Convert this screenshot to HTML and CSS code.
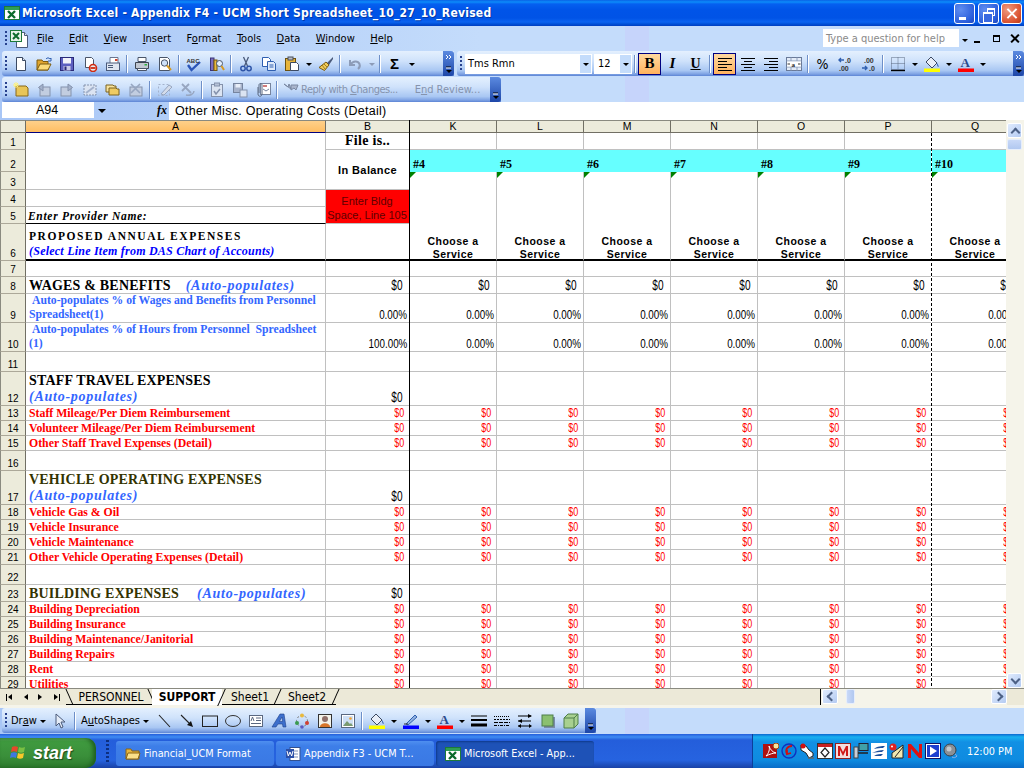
FILE: index.html
```html
<!DOCTYPE html>
<html lang="en">
<head>
<meta charset="utf-8">
<title>Microsoft Excel - Appendix F4</title>
<link rel="stylesheet" href="styles.css">
</head>
<body>
<svg class="defs" aria-hidden="true">
  <symbol id="xl" viewBox="0 0 16 16"><rect x="0.500" y="1.500" width="15" height="13" fill="#fff" stroke="#1d7a3a"/><rect x="1" y="2" width="14" height="3" fill="#2f9e55"/><path d="M4 6l7 7M11 6l-7 7" stroke="#0c6b2c" stroke-width="2.400"/></symbol>
  <symbol id="docxl" viewBox="0 0 18 18"><path d="M6.500 2.500h8l3 3v12h-11z" fill="#fff" stroke="#4a5a7a"/><path d="M14.500 2.500v3h3" fill="#dfe6f2" stroke="#4a5a7a"/><rect x="0.500" y="0.500" width="11" height="11" fill="#e8f4ea" stroke="#1d7a3a"/><path d="M3 3l6 6M9 3l-6 6" stroke="#0c6b2c" stroke-width="2"/></symbol>
  <symbol id="chev1" viewBox="0 0 11 25"><path d="M3 4l2 2-2 2M6 4l2 2-2 2" fill="none" stroke="#fff"/><path d="M3 16h5" stroke="#000"/><path d="M3 19h6l-3 3z" fill="#000"/><path d="M3 17h5" stroke="#fff"/></symbol>
  <symbol id="chev2" viewBox="0 0 11 25"><path d="M3 16h5" stroke="#000"/><path d="M3 19h6l-3 3z" fill="#000"/><path d="M3 17h5" stroke="#fff"/></symbol>
  <symbol id="new" viewBox="0 0 16 16"><path d="M3.500 1.500h6l3 3v10h-9z" fill="#fff" stroke="#3c4a63"/><path d="M9.500 1.500v3h3" fill="#d8e2f2" stroke="#3c4a63"/></symbol>
  <symbol id="open" viewBox="0 0 16 16"><path d="M1 14V4h5l1 1.500h5V14z" fill="#e0a52e" stroke="#7a5a10"/><path d="M1 14l3-6h11l-3 6z" fill="#fbdb7a" stroke="#7a5a10"/><path d="M10 3c1-1.500 3-1.500 4 0l1-1v3h-3" fill="none" stroke="#2f5fb0"/></symbol>
  <symbol id="save" viewBox="0 0 16 16"><rect x="1.500" y="1.500" width="13" height="13" fill="#5d5fc0" stroke="#2a2a78"/><rect x="4" y="2" width="8" height="5.500" fill="#f2f2fa"/><rect x="4.500" y="10" width="7" height="4.500" fill="#c9c9e6"/><rect x="5.500" y="10.500" width="2" height="3.500" fill="#2a2a78"/></symbol>
  <symbol id="perm" viewBox="0 0 16 16"><path d="M3.500 1.500h6l2 2v8h-8z" fill="#fff" stroke="#4a5568"/><circle cx="11" cy="12" r="3.500" fill="#e8e8e8" stroke="#d02a10" stroke-width="1.600"/><path d="M8.500 12h5" stroke="#d02a10" stroke-width="1.800"/></symbol>
  <symbol id="mail" viewBox="0 0 16 16"><path d="M5 1.500h8v6H5z" fill="#fff" stroke="#6b7690"/><rect x="1.500" y="7" width="13" height="7.500" fill="#dfe6f2" stroke="#4a5a7a"/><path d="M3 9.500h5M3 11.500h5" stroke="#4a5a7a"/><rect x="10" y="3" width="2.500" height="2" fill="#d0402a"/></symbol>
  <symbol id="print" viewBox="0 0 16 16"><path d="M4 1.500h8v4H4z" fill="#fff" stroke="#4a5568"/><path d="M1.500 6.500h13v6h-13z" fill="#c2c8d2" stroke="#3c4450"/><path d="M3.500 12.500h9v2h-9z" fill="#fff" stroke="#4a5568"/><rect x="10.500" y="8" width="2.500" height="1.500" fill="#30b040"/></symbol>
  <symbol id="prev" viewBox="0 0 16 16"><path d="M2.500 1.500h8l2 2v11h-10z" fill="#fff" stroke="#4a5568"/><circle cx="7.500" cy="7" r="3.200" fill="#cfe2fa" stroke="#4a5568"/><path d="M10 9.500l4 4.500" stroke="#d79a20" stroke-width="2"/></symbol>
  <symbol id="spell" viewBox="0 0 16 16"><path d="M2 9l3.500 5L14 6" fill="none" stroke="#2a55b8" stroke-width="2.400"/></symbol>
  <symbol id="res" viewBox="0 0 16 16"><rect x="1.500" y="2" width="3.500" height="12.500" fill="#7a6fc0" stroke="#3b3478"/><rect x="5" y="4" width="3" height="10.500" fill="#e8b93e" stroke="#77590f"/><circle cx="10.500" cy="7.500" r="3" fill="#e4effc" stroke="#4a5568"/><path d="M12.500 10l2.500 4" stroke="#d79a20" stroke-width="2"/></symbol>
  <symbol id="cut" viewBox="0 0 16 16"><path d="M5.500 1l4 9M10.500 1l-4 9" stroke="#4a5a7a" stroke-width="1.300"/><circle cx="5" cy="12.500" r="2.200" fill="none" stroke="#2f55a8" stroke-width="1.500"/><circle cx="11" cy="12.500" r="2.200" fill="none" stroke="#2f55a8" stroke-width="1.500"/></symbol>
  <symbol id="copy" viewBox="0 0 16 16"><path d="M1.500 1.500h6l2 2v7h-8z" fill="#fff" stroke="#2f5fb0"/><path d="M6.500 5.500h6l2 2v7h-8z" fill="#dfeafa" stroke="#2f5fb0"/><path d="M8.500 9h4M8.500 11h4" stroke="#2f5fb0"/></symbol>
  <symbol id="paste" viewBox="0 0 16 16"><rect x="1.500" y="2.500" width="10" height="12" fill="#e7b53c" stroke="#6d5210"/><rect x="4" y="1" width="5" height="3" fill="#b7bcc6" stroke="#4a4f58"/><path d="M6.500 6.500h6l2 2v6h-8z" fill="#fff" stroke="#3c4a63"/></symbol>
  <symbol id="brush" viewBox="0 0 16 16"><path d="M15 1L9 7l2 2 4-6z" fill="#4a5a7a"/><path d="M8 6l3 3-4.500 5.500L1 11.500z" fill="#f0cc5c" stroke="#7a5a10"/><path d="M4 9l3 4M6 8l3 3" stroke="#a57f18"/></symbol>
  <symbol id="undo" viewBox="0 0 16 16"><path d="M3 4v5h5M3.500 8.500C6 4.500 11 4.500 12.500 8c.8 2-.3 4-1.500 5" fill="none" stroke="#8d9cb8" stroke-width="2"/></symbol>
  <symbol id="g1" viewBox="0 0 16 16"><path d="M3 4l10 0 2 2v8H3z" fill="#e8c558" stroke="#87691a"/><path d="M0 3h6M3 0v6M1 1l4 4M5 1L1 5" stroke="#fff27a"/></symbol>
  <symbol id="g2" viewBox="0 0 16 16"><rect x="4" y="5" width="10" height="9" fill="#c2cde0" stroke="#8492ac"/><path d="M7 2L2.500 5.500 7 9z" fill="#a4b2cc" stroke="#8492ac"/></symbol>
  <symbol id="g3" viewBox="0 0 16 16"><rect x="2" y="5" width="10" height="9" fill="#c2cde0" stroke="#8492ac"/><path d="M9 2l4.500 3.500L9 9z" fill="#a4b2cc" stroke="#8492ac"/></symbol>
  <symbol id="g4" viewBox="0 0 16 16"><rect x="2" y="3" width="12" height="10" fill="#dbe4f2" stroke="#8492ac" stroke-dasharray="2 1"/><path d="M4 11l8-6" stroke="#a4b2cc" stroke-width="2"/></symbol>
  <symbol id="g5" viewBox="0 0 16 16"><path d="M1 3h7l1 1h2v6H1z" fill="#f7e29c" stroke="#7a6320"/><path d="M4 6h7l1 1h2v6H4z" fill="#efcb62" stroke="#7a6320"/></symbol>
  <symbol id="g6" viewBox="0 0 16 16"><rect x="2" y="5" width="12" height="9" fill="#c2cde0" stroke="#8492ac"/><path d="M3 2l9 9M12 2l-9 9" stroke="#97a6c0" stroke-width="1.600"/></symbol>
  <symbol id="g7" viewBox="0 0 16 16"><rect x="1.500" y="2.500" width="11" height="11" fill="none" stroke="#a4b2cc" stroke-dasharray="2 2"/><path d="M4 12l8-9 3 2-8 8z" fill="#d4dcea" stroke="#97a6c0"/></symbol>
  <symbol id="g8" viewBox="0 0 16 16"><path d="M2 2l9 9M9 2L2 9" stroke="#97a6c0" stroke-width="1.800"/><path d="M6 13c4 1 8-1 8-4" fill="none" stroke="#97a6c0" stroke-width="1.400"/></symbol>
  <symbol id="g9" viewBox="0 0 16 16"><rect x="2.500" y="2.500" width="11" height="12" fill="#dbe4f2" stroke="#8492ac"/><rect x="5.500" y="1" width="5" height="3" fill="#b6c2d8" stroke="#8492ac"/><path d="M5 9l2 3 4-5" fill="none" stroke="#8492ac" stroke-width="1.500"/></symbol>
  <symbol id="g10" viewBox="0 0 16 16"><rect x="1.500" y="1.500" width="9" height="9" fill="#a8b4cc" stroke="#76849e"/><rect x="3.500" y="2" width="5" height="3.500" fill="#e8eef8"/><rect x="8" y="8" width="7" height="7" fill="#dbe4f2" stroke="#8492ac"/></symbol>
  <symbol id="g11" viewBox="0 0 16 16"><rect x="5.500" y="1.500" width="10" height="11" fill="#fff" stroke="#76849e"/><path d="M8 4h4" stroke="#c05050" stroke-width="1.500"/><path d="M8 7l3 2 3-2" fill="none" stroke="#76849e"/><path d="M3 5v7c0 3 4 3 4 0V3c0-2-3-2-3 0v8" fill="none" stroke="#5a6880"/></symbol>
  <symbol id="g12" viewBox="0 0 16 16"><path d="M1 2l4 3 1-3 2 5zM8 3l7 0-2 5-2-2-3 2z" fill="#a9b5cc" stroke="#7a88a2"/></symbol>
  <symbol id="merge" viewBox="0 0 16 16"><rect x="0.500" y="1.500" width="15" height="13" fill="#e4ecf8" stroke="#6a7a98"/><path d="M0.500 5h15M0.500 11h15M5 1.500V5M11 1.500V5M5 11v3.500M11 11v3.500" stroke="#8fa0bc"/><rect x="1" y="5.500" width="14" height="5" fill="#fff"/><path d="M1.500 8h2.500M14.500 8H12" stroke="#333" stroke-width="1.200"/></symbol>
  <symbol id="al" viewBox="0 0 16 16"><path d="M1 2.500h14M1 5.500h9M1 8.500h14M1 11.500h9M1 14.500h14" stroke="#000"/></symbol>
  <symbol id="ac" viewBox="0 0 16 16"><path d="M1 2.500h14M4 5.500h8M1 8.500h14M4 11.500h8M1 14.500h14" stroke="#000"/></symbol>
  <symbol id="ar" viewBox="0 0 16 16"><path d="M1 2.500h14M6 5.500h9M1 8.500h14M6 11.500h9M1 14.500h14" stroke="#000"/></symbol>
  <symbol id="dec1" viewBox="0 0 16 16"><path d="M1 4h5M3 2L1 4l2 2" fill="none" stroke="#2f5fb0" stroke-width="1.400"/></symbol>
  <symbol id="dec2" viewBox="0 0 16 16"><path d="M1 12h5M4 10l2 2-2 2" fill="none" stroke="#2f5fb0" stroke-width="1.400"/></symbol>
  <symbol id="bord" viewBox="0 0 16 16"><path d="M1.500 1.500h13v12h-13zM8 1.500v12M1.500 7.500h13" fill="none" stroke="#5a6880" stroke-dasharray="1 1"/><path d="M1 14.500h14" stroke="#000" stroke-width="1.400"/></symbol>
  <symbol id="fill" viewBox="0 0 16 16"><path d="M7 1l6 6-5 5-6-6z" fill="#e8eef8" stroke="#3c4a63"/><path d="M13 7c1 1.500 2 3 1.500 4-.7 0-1.500-1-1.500-4z" fill="#2f5fb0"/><rect x="0" y="12.500" width="16" height="3.500" fill="#ffff00"/></symbol>
  <symbol id="fcol" viewBox="0 0 16 16"><rect x="0" y="12.500" width="16" height="3.500" fill="#ff0000"/></symbol>
  <symbol id="lcol" viewBox="0 0 16 16"><path d="M3 11L12 2l2 2-9 8z" fill="#8fb0e0" stroke="#2f5fb0"/><path d="M1 11h4" stroke="#333"/><rect x="0" y="12.500" width="16" height="3.500" fill="#0000ff"/></symbol>
  <symbol id="arrowcur" viewBox="0 0 16 16"><path d="M4 1v12l3-3 2 5 2-1-2-5h4z" fill="#e4ecf8" stroke="#4a5a7a"/></symbol>
  <symbol id="line" viewBox="0 0 16 16"><path d="M3 2l11 12" stroke="#222" stroke-width="1.100"/></symbol>
  <symbol id="larrow" viewBox="0 0 16 16"><path d="M2 2l9 9" stroke="#222" stroke-width="1.100"/><path d="M14 14l-6-2 4-4z" fill="#111"/></symbol>
  <symbol id="rect" viewBox="0 0 16 16"><rect x="0.500" y="3" width="15" height="10.500" fill="none" stroke="#222"/></symbol>
  <symbol id="oval" viewBox="0 0 16 16"><ellipse cx="8" cy="8" rx="7.500" ry="5.500" fill="none" stroke="#333"/></symbol>
  <symbol id="tbox" viewBox="0 0 16 16"><rect x="1.500" y="2.500" width="13" height="11" fill="#fff" stroke="#5a6880"/><path d="M3 8l1.500-4L6 8M8 5h5M8 7.500h5M3 10.500h10" fill="none" stroke="#5a6880"/></symbol>
  <symbol id="wart" viewBox="0 0 16 16"><path d="M1 14L9 1h4l2 13h-3l-.5-3H7l-2 3zM8.500 8.500h3L11 4z" fill="#3d6fcc" stroke="#1e3f8a" stroke-width=".6"/></symbol>
  <symbol id="diag" viewBox="0 0 16 16"><circle cx="8" cy="8" r="5.500" fill="none" stroke="#777" stroke-dasharray="2 2"/><circle cx="8" cy="2.500" r="2" fill="#e8b93e"/><circle cx="13" cy="10" r="2" fill="#d04030"/><circle cx="3" cy="10" r="2" fill="#3a9a50"/><circle cx="8" cy="14" r="1.800" fill="#5a5ac0"/></symbol>
  <symbol id="clip" viewBox="0 0 16 16"><rect x="1.500" y="1.500" width="13" height="13" fill="#f3f3ea" stroke="#333"/><circle cx="8" cy="6" r="3" fill="#90706a"/><path d="M3 14c0-5 10-5 10 0z" fill="#d6752a"/></symbol>
  <symbol id="pic" viewBox="0 0 16 16"><rect x="1.500" y="1.500" width="13" height="13" fill="#fff" stroke="#5a6880"/><rect x="3" y="3" width="10" height="10" fill="#cfe0f5"/><path d="M3 13l4-5 3 3 1-1 2 3z" fill="#7a9a70"/><circle cx="10.500" cy="5.500" r="1.300" fill="#f0a030"/></symbol>
  <symbol id="lw" viewBox="0 0 16 16"><path d="M0 3h16" stroke="#000" stroke-width="1"/><path d="M0 7h16" stroke="#000" stroke-width="2"/><path d="M0 12h16" stroke="#000" stroke-width="3"/></symbol>
  <symbol id="dash" viewBox="0 0 16 16"><path d="M0 3.500h16" stroke="#000" stroke-dasharray="1 1"/><path d="M0 6.500h16" stroke="#000" stroke-dasharray="2 1"/><path d="M0 9.500h16" stroke="#000" stroke-dasharray="4 1"/><path d="M0 12.500h16" stroke="#000" stroke-dasharray="3 1 1 1"/></symbol>
  <symbol id="arrs" viewBox="0 0 16 16"><path d="M1 3h13M1 8h13M1 13h13" stroke="#000"/><path d="M15 3l-4-2v4zM1 8l4-2v4zM1 13l3-2v4zM15 13l-3-2v4z" fill="#000"/></symbol>
  <symbol id="shad" viewBox="0 0 16 16"><rect x="4" y="4" width="11" height="11" fill="#7a8aa8"/><rect x="2" y="2" width="11" height="11" fill="#8bc070" stroke="#4f7f48"/></symbol>
  <symbol id="d3" viewBox="0 0 16 16"><path d="M1 5l4-4h10v10l-4 4H1z" fill="#a8d090" stroke="#4f7f48"/><path d="M1 5h10v10M11 5l4-4" fill="none" stroke="#4f7f48"/></symbol>
  <symbol id="flag" viewBox="0 0 18 18"><path d="M2 3c2-1 4-1 6 0l-1 5C5 7 3 7 1 8z" fill="#e8482a"/><path d="M9 3c2 1 4 1 6 0l-1 5c-2 1-4 1-6 0z" fill="#7ac043"/><path d="M1 9c2-1 4-1 6 0l-1 5c-2-1-4-1-6 0z" fill="#3f78e0"/><path d="M8 9c2 1 4 1 6 0l-1 5c-2 1-4 1-6 0z" fill="#f9c82a"/></symbol>
  <symbol id="folder" viewBox="0 0 16 16"><path d="M1 13V3h5l1 2h7v8z" fill="#e7b53c" stroke="#8a6414"/><path d="M1 13l2-6h12l-2 6z" fill="#fbe08a" stroke="#8a6414"/></symbol>
  <symbol id="word" viewBox="0 0 16 16"><rect x="5" y="1.500" width="10" height="13" fill="#fff" stroke="#33518f"/><path d="M8 5h5M8 8h5M8 11h5" stroke="#7b8fb8"/><rect x="1" y="3" width="8" height="9" fill="#2a4fa8"/><path d="M2 5l1.300 5L5 6l1.700 4L8 5" fill="none" stroke="#fff"/></symbol>
  <symbol id="t1" viewBox="0 0 16 16"><rect x="0" y="1" width="14" height="14" fill="#b01010"/><path d="M3 13c3-3 4-7 3-10 1 3 3 6 7 7-3 0-6 1-10 3z" fill="none" stroke="#fff"/><circle cx="13" cy="3" r="3" fill="#f5e6a0" stroke="#a04010"/></symbol>
  <symbol id="t2" viewBox="0 0 16 16"><circle cx="8" cy="8" r="7" fill="#0a8ae0" stroke="#1030c0" stroke-width="1.400"/><path d="M11 3C6 3 4 7 6 11M6 7l0 4 4-1" fill="none" stroke="#d01010" stroke-width="1.800"/></symbol>
  <symbol id="t3" viewBox="0 0 16 16"><path d="M2 2l5 1 3 4 4 3v3l-4 2-3-5-5-3z" fill="#fff" stroke="#222"/><circle cx="4" cy="3" r="2.500" fill="#d01010"/><path d="M9 15h6" stroke="#666" stroke-width="1.500"/></symbol>
  <symbol id="t4" viewBox="0 0 16 16"><rect x="0.500" y="0.500" width="15" height="15" fill="#fff" stroke="#333"/><rect x="1" y="1" width="14" height="3" fill="#c82020"/><path d="M8 5l4 4.500-4 4.500-4-4.500z" fill="#fff" stroke="#222" stroke-width="1.200"/></symbol>
  <symbol id="t5" viewBox="0 0 16 16"><rect x="0.500" y="0.500" width="15" height="15" fill="#f4dede" stroke="#902020"/><path d="M3 13V3h2l3 6 3-6h2v10h-2V7l-3 6-3-6v6z" fill="#d01818"/></symbol>
  <symbol id="t6" viewBox="0 0 16 16"><rect x="1" y="4" width="4" height="11" fill="#c8cdd8" stroke="#444"/><rect x="6" y="0.500" width="9" height="7" fill="#40a0a8" stroke="#223"/><path d="M5 10h10" stroke="#222" stroke-width="1.500"/></symbol>
  <symbol id="t7" viewBox="0 0 16 16"><rect width="16" height="16" fill="#fff"/><path d="M3 6c3-3 8-3 11-3l-2 2c-3 0-6 0-9 1zM1 10c4-2 8-3 12-3l-2 2c-3 0-6 0-10 1zM3 13c3-2 6-2 9-2l-2 2z" fill="#1c4f9c"/></symbol>
  <symbol id="t8" viewBox="0 0 16 16"><circle cx="4" cy="4" r="3.500" fill="#e02020"/><circle cx="3" cy="3.500" r="1" fill="#fff"/><path d="M3 15V10l11-8v13z" fill="#f0e8b0" stroke="#222"/><path d="M6 14l8-10" stroke="#222"/></symbol>
  <symbol id="t9" viewBox="0 0 16 16"><path d="M1 15V1h3l8 9V1h3v14h-3L4 6v9z" fill="#e01010"/></symbol>
  <symbol id="t10" viewBox="0 0 16 16"><rect x="0.500" y="0.500" width="15" height="15" fill="#fff" stroke="#101060"/><rect x="2" y="2" width="12" height="12" fill="#1d3fd0"/><path d="M5 3.500l7 4.500-7 4.500z" fill="#fff"/></symbol>
  <symbol id="t11" viewBox="0 0 16 16"><circle cx="7" cy="7" r="6" fill="#8a9096" stroke="#3a4046"/><circle cx="6" cy="6" r="2.500" fill="#c4c8cc"/><path d="M12 11c2 1 2 2 1 3M9 14c2 1 3 1 5-1" fill="none" stroke="#8fb0e8"/></symbol>
</svg>

<div class="app">
  <header class="title">
    <svg class="ic16"><use href="#xl"/></svg>
    <span class="title-text">Microsoft Excel - Appendix F4 - UCM Short Spreadsheet_10_27_10_Revised</span>
    <span class="wbtns">
      <span class="wbtn"><i class="g-min"></i></span>
      <span class="wbtn"><i class="g-res"></i></span>
      <span class="wbtn close"><i class="g-x"></i></span>
    </span>
  </header>

  <nav class="dock menu">
    <i class="grip"></i>
    <svg class="docicon"><use href="#docxl"/></svg>
    <span class="mi"><u>F</u>ile</span>
    <span class="mi"><u>E</u>dit</span>
    <span class="mi"><u>V</u>iew</span>
    <span class="mi"><u>I</u>nsert</span>
    <span class="mi">F<u>o</u>rmat</span>
    <span class="mi"><u>T</u>ools</span>
    <span class="mi"><u>D</u>ata</span>
    <span class="mi"><u>W</u>indow</span>
    <span class="mi"><u>H</u>elp</span>
    <span class="help"><span class="help-text">Type a question for help</span><b class="dd"></b></span>
    <span class="mdi"><i class="m-min"></i><i class="m-res"></i><i class="m-x"></i></span>
  </nav>

  <div class="dock tools">
    <div class="band b1">
      <i class="grip"></i>
      <span class="tb"><svg class="ic"><use href="#new"/></svg></span>
      <span class="tb"><svg class="ic"><use href="#open"/></svg></span>
      <span class="tb"><svg class="ic"><use href="#save"/></svg></span>
      <span class="tb"><svg class="ic"><use href="#perm"/></svg></span>
      <span class="tb"><svg class="ic"><use href="#mail"/></svg></span>
      <i class="sep"></i>
      <span class="tb"><svg class="ic"><use href="#print"/></svg></span>
      <span class="tb"><svg class="ic"><use href="#prev"/></svg></span>
      <i class="sep"></i>
      <span class="tb"><svg class="ic" viewBox="0 0 16 16"><use href="#spell"/><text x="0.500" y="6.500" class="svgt">ABC</text></svg></span>
      <span class="tb"><svg class="ic"><use href="#res"/></svg></span>
      <i class="sep"></i>
      <span class="tb"><svg class="ic"><use href="#cut"/></svg></span>
      <span class="tb"><svg class="ic"><use href="#copy"/></svg></span>
      <span class="tb"><svg class="ic"><use href="#paste"/></svg></span>
      <b class="dd"></b>
      <span class="tb"><svg class="ic"><use href="#brush"/></svg></span>
      <i class="sep"></i>
      <span class="tb"><svg class="ic"><use href="#undo"/></svg></span>
      <b class="dd off"></b>
      <i class="sep"></i>
      <span class="tb sigma">Σ</span>
      <b class="dd"></b>
      <span class="chev"><svg class="chevic"><use href="#chev1"/></svg></span>
    </div>
    <div class="band b2">
      <i class="grip"></i>
      <span class="combo font">Tms Rmn<b class="dd"></b></span>
      <span class="combo size">12<b class="dd"></b></span>
      <i class="sep"></i>
      <span class="tb on fb">B</span>
      <span class="tb fi">I</span>
      <span class="tb fu">U</span>
      <i class="sep"></i>
      <span class="tb on"><svg class="ic"><use href="#al"/></svg></span>
      <span class="tb"><svg class="ic"><use href="#ac"/></svg></span>
      <span class="tb"><svg class="ic"><use href="#ar"/></svg></span>
      <span class="tb"><svg class="ic" viewBox="0 0 16 16"><use href="#merge"/><text x="5.500" y="10.500" class="svga">a</text></svg></span>
      <i class="sep"></i>
      <span class="tb pct">%</span>
      <span class="tb"><svg class="ic" viewBox="0 0 16 16"><use href="#dec1"/><text x="7" y="6.500" class="svgn">.0</text><text x="1" y="14.500" class="svgn">.00</text></svg></span>
      <span class="tb"><svg class="ic" viewBox="0 0 16 16"><use href="#dec2"/><text x="3" y="6.500" class="svgn">.00</text><text x="8" y="14.500" class="svgn">.0</text></svg></span>
      <i class="sep"></i>
      <span class="tb"><svg class="ic"><use href="#bord"/></svg></span>
      <b class="dd"></b>
      <span class="tb"><svg class="ic"><use href="#fill"/></svg></span>
      <b class="dd"></b>
      <span class="tb"><svg class="ic" viewBox="0 0 16 16"><use href="#fcol"/><text x="2.500" y="11" class="svgA">A</text></svg></span>
      <b class="dd"></b>
      <span class="chev"><svg class="chevic"><use href="#chev1"/></svg></span>
    </div>
  </div>

  <div class="dock tools t2">
    <div class="band b3">
      <i class="grip"></i>
      <span class="tb"><svg class="ic"><use href="#g1"/></svg></span>
      <span class="tb"><svg class="ic"><use href="#g2"/></svg></span>
      <span class="tb"><svg class="ic"><use href="#g3"/></svg></span>
      <span class="tb"><svg class="ic"><use href="#g4"/></svg></span>
      <span class="tb"><svg class="ic"><use href="#g5"/></svg></span>
      <span class="tb"><svg class="ic"><use href="#g6"/></svg></span>
      <i class="sep"></i>
      <span class="tb"><svg class="ic"><use href="#g7"/></svg></span>
      <span class="tb"><svg class="ic"><use href="#g8"/></svg></span>
      <i class="sep"></i>
      <span class="tb"><svg class="ic"><use href="#g9"/></svg></span>
      <span class="tb"><svg class="ic"><use href="#g10"/></svg></span>
      <span class="tb"><svg class="ic"><use href="#g11"/></svg></span>
      <i class="sep"></i>
      <svg class="ic reply"><use href="#g12"/></svg>
      <span class="rtext rep">Reply with <u>C</u>hanges...</span>
      <span class="rtext end">E<u>n</u>d Review...</span>
      <span class="chev"><svg class="chevic"><use href="#chev2"/></svg></span>
    </div>
  </div>

  <div class="fbar">
    <span class="namebox">A94</span>
    <b class="dd namedd"></b>
    <span class="fx">fx</span>
    <span class="formula">Other Misc. Operating Costs (Detail)</span>
  </div>

  <main class="grid">
    <div class="sheet">
      <table>
        <colgroup><col class="c0"><col class="ca"><col class="cb"><col class="ck"><col class="ck"><col class="ck"><col class="ck"><col class="ck"><col class="ck"><col class="ck"></colgroup>
        <thead>
          <tr class="hd"><th class="corner"></th><th class="sel">A</th><th>B</th><th>K</th><th>L</th><th>M</th><th>N</th><th>O</th><th>P</th><th>Q</th></tr>
        </thead>
        <tbody>
          <tr class="h17"><th>1</th><td rowspan="3"></td><td class="filis">File is..</td><td></td><td></td><td></td><td></td><td></td><td></td><td></td></tr>
          <tr class="h22"><th>2</th><td rowspan="2" class="inbal">In Balance</td><td class="cy">#4</td><td class="cy">#5</td><td class="cy">#6</td><td class="cy">#7</td><td class="cy">#8</td><td class="cy">#9</td><td class="cy">#10</td></tr>
          <tr class="h18"><th>3</th><td rowspan="4" class="svc tk"><div>Choose a Service</div></td><td rowspan="4" class="svc tk"><div>Choose a Service</div></td><td rowspan="4" class="svc tk"><div>Choose a Service</div></td><td rowspan="4" class="svc tk"><div>Choose a Service</div></td><td rowspan="4" class="svc tk"><div>Choose a Service</div></td><td rowspan="4" class="svc tk"><div>Choose a Service</div></td><td rowspan="4" class="svc tk"><div>Choose a Service</div></td></tr>
          <tr class="h17"><th>4</th><td></td><td rowspan="2" class="bldg">Enter Bldg Space, Line 105</td></tr>
          <tr class="h17"><th>5</th><td class="prov">Enter Provider Name:</td></tr>
          <tr class="h37"><th>6</th><td class="tk lbl"><div class="prop">PROPOSED ANNUAL EXPENSES</div><div class="sel-line">(Select Line Item from DAS Chart of Accounts)</div></td><td class="tk"></td></tr>
          <tr class="h16"><th>7</th><td></td><td></td><td></td><td></td><td></td><td></td><td></td><td></td><td></td></tr>
          <tr class="h17"><th>8</th><td class="lbl"><span class="head">WAGES &amp; BENEFITS</span><span class="auto gap1">(Auto-populates)</span></td><td class="num"><span>$0</span></td><td class="num"><span>$0</span></td><td class="num"><span>$0</span></td><td class="num"><span>$0</span></td><td class="num"><span>$0</span></td><td class="num"><span>$0</span></td><td class="num"><span>$0</span></td><td class="num"><span>$0</span></td></tr>
          <tr class="h29"><th>9</th><td class="lbl note"><div class="ind">Auto-populates % of Wages and Benefits from Personnel</div><div>Spreadsheet(1)</div></td><td class="pc"><span>0.00%</span></td><td class="pc"><span>0.00%</span></td><td class="pc"><span>0.00%</span></td><td class="pc"><span>0.00%</span></td><td class="pc"><span>0.00%</span></td><td class="pc"><span>0.00%</span></td><td class="pc"><span>0.00%</span></td><td class="pc"><span>0.00%</span></td></tr>
          <tr class="h29"><th>10</th><td class="lbl note"><div class="ind">Auto-populates % of Hours from Personnel&nbsp; Spreadsheet</div><div>(1)</div></td><td class="pc"><span>100.00%</span></td><td class="pc"><span>0.00%</span></td><td class="pc"><span>0.00%</span></td><td class="pc"><span>0.00%</span></td><td class="pc"><span>0.00%</span></td><td class="pc"><span>0.00%</span></td><td class="pc"><span>0.00%</span></td><td class="pc"><span>0.00%</span></td></tr>
          <tr class="h20"><th>11</th><td></td><td></td><td></td><td></td><td></td><td></td><td></td><td></td><td></td></tr>
          <tr class="h34"><th>12</th><td class="lbl"><div class="head">STAFF TRAVEL EXPENSES</div><div class="auto">(Auto-populates)</div></td><td class="num"><span>$0</span></td><td></td><td></td><td></td><td></td><td></td><td></td><td></td></tr>
          <tr class="h15"><th>13</th><td class="item">Staff Mileage/Per Diem Reimbursement</td><td class="red"><span>$0</span></td><td class="red"><span>$0</span></td><td class="red"><span>$0</span></td><td class="red"><span>$0</span></td><td class="red"><span>$0</span></td><td class="red"><span>$0</span></td><td class="red"><span>$0</span></td><td class="red"><span>$0</span></td></tr>
          <tr class="h15"><th>14</th><td class="item">Volunteer Mileage/Per Diem Reimbursement</td><td class="red"><span>$0</span></td><td class="red"><span>$0</span></td><td class="red"><span>$0</span></td><td class="red"><span>$0</span></td><td class="red"><span>$0</span></td><td class="red"><span>$0</span></td><td class="red"><span>$0</span></td><td class="red"><span>$0</span></td></tr>
          <tr class="h15"><th>15</th><td class="item">Other Staff Travel Expenses (Detail)</td><td class="red"><span>$0</span></td><td class="red"><span>$0</span></td><td class="red"><span>$0</span></td><td class="red"><span>$0</span></td><td class="red"><span>$0</span></td><td class="red"><span>$0</span></td><td class="red"><span>$0</span></td><td class="red"><span>$0</span></td></tr>
          <tr class="h20"><th>16</th><td></td><td></td><td></td><td></td><td></td><td></td><td></td><td></td><td></td></tr>
          <tr class="h34"><th>17</th><td class="lbl"><div class="head olive">VEHICLE OPERATING EXPENSES</div><div class="auto">(Auto-populates)</div></td><td class="num"><span>$0</span></td><td></td><td></td><td></td><td></td><td></td><td></td><td></td></tr>
          <tr class="h15"><th>18</th><td class="item">Vehicle Gas &amp; Oil</td><td class="red"><span>$0</span></td><td class="red"><span>$0</span></td><td class="red"><span>$0</span></td><td class="red"><span>$0</span></td><td class="red"><span>$0</span></td><td class="red"><span>$0</span></td><td class="red"><span>$0</span></td><td class="red"><span>$0</span></td></tr>
          <tr class="h15"><th>19</th><td class="item">Vehicle Insurance</td><td class="red"><span>$0</span></td><td class="red"><span>$0</span></td><td class="red"><span>$0</span></td><td class="red"><span>$0</span></td><td class="red"><span>$0</span></td><td class="red"><span>$0</span></td><td class="red"><span>$0</span></td><td class="red"><span>$0</span></td></tr>
          <tr class="h15"><th>20</th><td class="item">Vehicle Maintenance</td><td class="red"><span>$0</span></td><td class="red"><span>$0</span></td><td class="red"><span>$0</span></td><td class="red"><span>$0</span></td><td class="red"><span>$0</span></td><td class="red"><span>$0</span></td><td class="red"><span>$0</span></td><td class="red"><span>$0</span></td></tr>
          <tr class="h15"><th>21</th><td class="item">Other Vehicle Operating Expenses (Detail)</td><td class="red"><span>$0</span></td><td class="red"><span>$0</span></td><td class="red"><span>$0</span></td><td class="red"><span>$0</span></td><td class="red"><span>$0</span></td><td class="red"><span>$0</span></td><td class="red"><span>$0</span></td><td class="red"><span>$0</span></td></tr>
          <tr class="h20"><th>22</th><td></td><td></td><td></td><td></td><td></td><td></td><td></td><td></td><td></td></tr>
          <tr class="h17"><th>23</th><td class="lbl"><span class="head olive">BUILDING EXPENSES</span><span class="auto gap2">(Auto-populates)</span></td><td class="num"><span>$0</span></td><td></td><td></td><td></td><td></td><td></td><td></td><td></td></tr>
          <tr class="h15"><th>24</th><td class="item">Building Depreciation</td><td class="red"><span>$0</span></td><td class="red"><span>$0</span></td><td class="red"><span>$0</span></td><td class="red"><span>$0</span></td><td class="red"><span>$0</span></td><td class="red"><span>$0</span></td><td class="red"><span>$0</span></td><td class="red"><span>$0</span></td></tr>
          <tr class="h15"><th>25</th><td class="item">Building Insurance</td><td class="red"><span>$0</span></td><td class="red"><span>$0</span></td><td class="red"><span>$0</span></td><td class="red"><span>$0</span></td><td class="red"><span>$0</span></td><td class="red"><span>$0</span></td><td class="red"><span>$0</span></td><td class="red"><span>$0</span></td></tr>
          <tr class="h15"><th>26</th><td class="item">Building Maintenance/Janitorial</td><td class="red"><span>$0</span></td><td class="red"><span>$0</span></td><td class="red"><span>$0</span></td><td class="red"><span>$0</span></td><td class="red"><span>$0</span></td><td class="red"><span>$0</span></td><td class="red"><span>$0</span></td><td class="red"><span>$0</span></td></tr>
          <tr class="h15"><th>27</th><td class="item">Building Repairs</td><td class="red"><span>$0</span></td><td class="red"><span>$0</span></td><td class="red"><span>$0</span></td><td class="red"><span>$0</span></td><td class="red"><span>$0</span></td><td class="red"><span>$0</span></td><td class="red"><span>$0</span></td><td class="red"><span>$0</span></td></tr>
          <tr class="h15"><th>28</th><td class="item">Rent</td><td class="red"><span>$0</span></td><td class="red"><span>$0</span></td><td class="red"><span>$0</span></td><td class="red"><span>$0</span></td><td class="red"><span>$0</span></td><td class="red"><span>$0</span></td><td class="red"><span>$0</span></td><td class="red"><span>$0</span></td></tr>
          <tr class="h15"><th>29</th><td class="item">Utilities</td><td class="red"><span>$0</span></td><td class="red"><span>$0</span></td><td class="red"><span>$0</span></td><td class="red"><span>$0</span></td><td class="red"><span>$0</span></td><td class="red"><span>$0</span></td><td class="red"><span>$0</span></td><td class="red"><span>$0</span></td></tr>
        </tbody>
      </table>
      <i class="freeze"></i>
      <i class="pagebreak"></i>
    </div>
    <div class="vscroll">
      <span class="sbtn up"></span>
      <span class="vthumb"></span>
      <span class="sbtn down"></span>
    </div>
  </main>

  <div class="tabbar">
    <span class="tabnav">
      <i class="n-first"></i><i class="n-prev"></i><i class="n-next"></i><i class="n-last"></i>
    </span>
    <span class="tab first back">PERSONNEL</span>
    <span class="tab active fwd">SUPPORT</span>
    <span class="tab fwd t1">Sheet1</span>
    <span class="tab fwd t2w">Sheet2</span>
    <span class="hscroll">
      <span class="sbtn left"></span>
      <span class="hthumb"></span>
      <span class="sbtn right"></span>
    </span>
  </div>
  <div class="rule"></div>

  <div class="dock tools draw">
    <div class="band b4">
      <i class="grip"></i>
      <span class="dtext first-d">Dr<u>a</u>w<b class="dd"></b></span>
      <span class="tb"><svg class="ic"><use href="#arrowcur"/></svg></span>
      <i class="sep"></i>
      <span class="dtext shapes">A<u>u</u>toShapes<b class="dd"></b></span>
      <span class="tb"><svg class="ic"><use href="#line"/></svg></span>
      <span class="tb"><svg class="ic"><use href="#larrow"/></svg></span>
      <span class="tb"><svg class="ic"><use href="#rect"/></svg></span>
      <span class="tb"><svg class="ic"><use href="#oval"/></svg></span>
      <span class="tb"><svg class="ic"><use href="#tbox"/></svg></span>
      <span class="tb"><svg class="ic"><use href="#wart"/></svg></span>
      <span class="tb"><svg class="ic"><use href="#diag"/></svg></span>
      <span class="tb"><svg class="ic"><use href="#clip"/></svg></span>
      <span class="tb"><svg class="ic"><use href="#pic"/></svg></span>
      <i class="sep"></i>
      <span class="tb"><svg class="ic"><use href="#fill"/></svg></span>
      <b class="dd"></b>
      <span class="tb"><svg class="ic"><use href="#lcol"/></svg></span>
      <b class="dd"></b>
      <span class="tb"><svg class="ic" viewBox="0 0 16 16"><use href="#fcol"/><text x="2.500" y="11" class="svgA">A</text></svg></span>
      <b class="dd"></b>
      <span class="tb"><svg class="ic"><use href="#lw"/></svg></span>
      <span class="tb"><svg class="ic"><use href="#dash"/></svg></span>
      <span class="tb"><svg class="ic"><use href="#arrs"/></svg></span>
      <span class="tb"><svg class="ic"><use href="#shad"/></svg></span>
      <span class="tb"><svg class="ic"><use href="#d3"/></svg></span>
      <span class="chev"><svg class="chevic"><use href="#chev2"/></svg></span>
    </div>
  </div>

  <footer class="taskbar">
    <span class="start"><svg class="flag"><use href="#flag"/></svg><span class="start-text">start</span></span>
    <i class="qgrip"></i>
    <span class="task"><svg class="ic16"><use href="#folder"/></svg>Financial_UCM Format</span>
    <span class="task"><svg class="ic16"><use href="#word"/></svg>Appendix F3 - UCM T...</span>
    <span class="task active"><svg class="ic16"><use href="#xl"/></svg>Microsoft Excel - App...</span>
    <span class="tray">
      <svg class="ic16"><use href="#t1"/></svg>
      <svg class="ic16"><use href="#t2"/></svg>
      <svg class="ic16"><use href="#t3"/></svg>
      <svg class="ic16"><use href="#t4"/></svg>
      <svg class="ic16"><use href="#t5"/></svg>
      <svg class="ic16"><use href="#t6"/></svg>
      <svg class="ic16"><use href="#t7"/></svg>
      <svg class="ic16"><use href="#t8"/></svg>
      <svg class="ic16"><use href="#t9"/></svg>
      <svg class="ic16"><use href="#t10"/></svg>
      <svg class="ic16"><use href="#t11"/></svg>
      <span class="clock">12:00 PM</span>
    </span>
  </footer>
</div>
</body>
</html>
```

FILE: styles.css
```css
* { box-sizing: border-box; }
html, body { margin: 0; padding: 0; overflow: hidden; background: #c4dcfb; }
.defs { position: absolute; width: 0; height: 0; }
.app { width: 1024px; height: 768px; display: flex; flex-direction: column; overflow: hidden;
  font-family: "DejaVu Sans Condensed", "Liberation Sans", sans-serif; font-size: 11px; color: #000; }
.ic16 { width: 16px; height: 16px; flex: none; display: block; }
.ic { width: 16px; height: 16px; display: block; }
.svgt { font: bold 6px "Liberation Sans", sans-serif; fill: #333; }
.svga { font: bold 7px "Liberation Serif", serif; fill: #222; }
.svgn { font: bold 7px "Liberation Sans", sans-serif; fill: #333; }
.svgA { font: bold 13px "Liberation Serif", serif; fill: #2a4a8a; }

/* title bar */
.title { height: 26px; flex: none; display: flex; align-items: center; padding-left: 4px; color: #fff;
  background: linear-gradient(180deg, #0a62e6 0, #0c8cfa 2px, #0560f0 4px, #0054e8 10px, #0053e6 18px, #0a63f0 22px, #0050d8 24px, #003ec0 26px); }
.title-text { margin-left: 2px; font: bold 12px "DejaVu Sans Condensed", sans-serif; letter-spacing: .24px; white-space: nowrap; text-shadow: 1px 1px 0 #0038a8; }
.wbtns { margin-left: auto; display: flex; gap: 3px; padding-right: 2px; }
.wbtn { position: relative; width: 21px; height: 21px; border: 1px solid #fff; border-radius: 3px; background: radial-gradient(circle at 30% 30%, #5f8df0, #2c5fdc 70%, #1c45bc); }
.wbtn.close { background: radial-gradient(circle at 30% 30%, #ef9a80, #dc5634 65%, #b93a16); margin-left: -1px; }
.g-min { position: absolute; left: 4px; top: 13px; width: 7px; height: 3px; background: #fff; }
.g-res { position: absolute; left: 8px; top: 4px; width: 8px; height: 8px; border: 1px solid #fff; border-top-width: 2px; }
.g-res::after { content: ""; position: absolute; left: -5px; top: 2px; width: 8px; height: 8px; border: 1px solid #fff; border-top-width: 2px; background: #3a69e0; }
.g-x { position: absolute; inset: 4px; }
.g-x::before, .g-x::after { content: ""; position: absolute; left: 5px; top: -1px; width: 2px; height: 13px; background: #fff; transform: rotate(45deg); }
.g-x::after { transform: rotate(-45deg); }

/* docks */
.dock { flex: none; background: linear-gradient(90deg, transparent 625px, #c6d4fb 625px, #c6d4fb 649px, transparent 649px), linear-gradient(90deg, #a8c6f6 0, #c4dcfb 480px); }
.menu { height: 25px; display: flex; align-items: center; padding-left: 5px; }
.grip { flex: none; width: 2px; height: 16px; background-image: linear-gradient(180deg, #27418e 0, #27418e 2px, transparent 2px); background-size: 2px 4px; margin-right: 2px; }
.docicon { flex: none; display: block; width: 18px; height: 18px; margin: 0 9px 0 1px; }
.mi { font-size: 11px; margin-right: 15.500px; white-space: nowrap; }
.help { position: absolute; left: 823px; top: 29px; width: 148px; height: 18px; background: #fff; display: flex; align-items: center; justify-content: space-between; color: #8a8a8a; padding-left: 3px; font: 11px "DejaVu Sans Condensed", sans-serif; }
.help-text { white-space: nowrap; }
.help .dd { margin-right: 0; width: 12px; height: 18px; background: #c4dcfb; }
.mdi i { position: absolute; display: block; }
.m-min { left: 974px; top: 41px; width: 6px; height: 2px; background: #000; }
.m-res { left: 993px; top: 35px; width: 7px; height: 7px; border: 1px solid #000; border-top-width: 2px; background: #c4dcfb; }
.m-res::before { content: ""; position: absolute; left: 2px; top: -4px; width: 6px; height: 6px; border: 1px solid #000; border-top-width: 2px; z-index: -1; }
.m-x { left: 1010px; top: 34px; width: 10px; height: 10px; }
.m-x::before, .m-x::after { content: ""; position: absolute; left: 4px; top: -1px; width: 2px; height: 11px; background: #000; transform: rotate(45deg); }
.m-x::after { transform: rotate(-45deg); }

.tools { height: 26px; display: flex; padding-left: 2px; }
.tools.t2 { height: 25px; }
.band { height: 25px; display: flex; align-items: center; padding-left: 3px; border-radius: 3px 0 0 3px; position: relative;
  background: linear-gradient(180deg, #e4f0fe 0, #cfe2fb 40%, #a9c7f3 78%, #7fa3e4 92%, #5c84d4 100%); }
.b1 { width: 452px; }
.b2 { width: 567px; margin-left: 3px; padding-left: 3px; }
.b3 { width: 499px; height: 25px; }
.b4 { width: 594px; }
.band > .grip { margin-right: 2px; margin-left: 0; }
.tb { flex: none; width: 23px; height: 22px; display: flex; align-items: center; justify-content: center; font-family: "Liberation Serif", serif; font-size: 14px; }
.tb.on { background: linear-gradient(180deg, #ffd9a0, #ffb25e); border: 1px solid #000080; }
.sep { flex: none; width: 6px; height: 18px; background: linear-gradient(90deg, transparent 2px, #6d8fc8 2px, #6d8fc8 3px, #fff 3px, #fff 4px, transparent 4px); }
.dd { flex: none; width: 11px; height: 22px; display: inline-block; position: relative; }
.dd::after { content: ""; position: absolute; left: 3px; top: 10px; border: 3px solid transparent; border-top: 3px solid #000; border-bottom: 0; }
.dd.off::after { border-top-color: #8d9cb8; }
.sigma { font: bold 15px "Liberation Sans", sans-serif; }
.fb { font: bold 15px "Liberation Serif", serif; }
.fi { font: italic bold 15px "Liberation Serif", serif; }
.fu { font: bold 14px "Liberation Serif", serif; text-decoration: underline; }
.pct { font: 14px "DejaVu Sans Condensed", sans-serif; }
.chev { position: absolute; right: 0; top: 0; bottom: 0; width: 11px; border-radius: 0 3px 3px 0; background: linear-gradient(180deg, #5b8ae0, #1d46a8); }
.chevic { display: block; width: 11px; height: 25px; }
.combo { flex: none; height: 20px; background: #fff; border: 1px solid #fff; display: flex; align-items: center; justify-content: space-between; padding-left: 2px; font: 11px "DejaVu Sans Condensed", sans-serif; position: relative; }
.combo .dd { height: 18px; background: #c4dcfb; width: 11px; }
.combo .dd::after { top: 8px; }
.font { width: 127px; margin: 0 2px 0 1px; }
.size { width: 38px; padding-left: 3px; }
.reply { flex: none; margin: 0 2px 0 3px; }
.rtext { color: #8593ad; font-size: 11px; white-space: nowrap; }
.rtext.rep { letter-spacing: -.5px; }
.rtext.end { margin-left: 17px; }
.dtext { flex: none; white-space: nowrap; display: inline-flex; align-items: center; font-size: 11px; margin: 0 3px 0 1px; }
.dtext .dd { width: 9px; }
.first-d { margin-left: 2px; }
.shapes { margin-left: 3px; margin-right: 3px; }

/* formula bar */
.fbar { height: 18px; flex: none; display: flex; align-items: flex-start; background: linear-gradient(90deg, #a8c6f6 0, #c4dcfb 480px); }
.namebox { margin-left: 2px; width: 92px; height: 16px; background: #fff; text-align: left; padding-left: 34px; font: 12.500px/16px "Liberation Sans", sans-serif; }
.namedd { height: 16px; width: 14px; margin-left: 0; }
.namedd::after { left: 4px; top: 7px; border-width: 4px; border-bottom: 0; }
.fx { margin-left: 49px; width: 12px; font: italic bold 12px/16px "Liberation Serif", serif; }
.formula { flex: 1; height: 18px; background: #fff; padding-left: 6px; font: 12.500px/18px "Liberation Sans", sans-serif; letter-spacing: .28px; white-space: nowrap; }

/* spreadsheet */
.grid { flex: 1; min-height: 0; display: flex; border-top: 0; background: #fff; }
.sheet { position: relative; width: 1006px; flex: none; overflow: hidden; }
table { border-collapse: separate; border-spacing: 0; table-layout: fixed; width: 1019px; }
.c0 { width: 26px; } .ca { width: 300px; } .cb { width: 84px; } .ck { width: 87px; }
th, td { padding: 0; box-sizing: border-box; overflow: hidden; }
td { border-right: 1px solid #c0c0c0; border-bottom: 1px solid #c0c0c0; vertical-align: bottom; line-height: 13px; white-space: nowrap; }
tbody th { background: #ecebdb; border-right: 1px solid #716f64; border-left: 1px solid #8a8a80; border-bottom: 1px solid #aca899; font: 10px/12px "Liberation Sans", sans-serif; vertical-align: bottom; padding-bottom: 0; }
.hd { height: 13px; }
.hd th { height: 13px; background: #ecebdb; border-top: 1px solid #8a8a80; border-bottom: 1px solid #716f64; border-right: 1px solid #716f64; font: 10.500px/11px "Liberation Sans", sans-serif; }
.hd .corner { border-left: 1px solid #8a8a80; }
.hd .sel { background: linear-gradient(180deg, #ffd08a, #ffbe63); border-bottom: 1px solid #000080; }
.h15 td, .h15 th { height: 15px; } .h16 td, .h16 th { height: 16px; } .h17 td, .h17 th { height: 17px; }
.h18 td, .h18 th { height: 18px; } .h20 td, .h20 th { height: 20px; } .h22 td, .h22 th { height: 22px; }
.h29 td, .h29 th { height: 29px; } .h34 td, .h34 th { height: 34px; } .h37 td, .h37 th { height: 37px; }
.filis { text-align: center; font: bold 14px/16px "Liberation Serif", serif; letter-spacing: .3px; }
.inbal { text-align: center; vertical-align: middle; font: bold 11px "Liberation Sans", sans-serif; letter-spacing: .4px; }
.cy { background: #66ffff; border-right: 0; border-bottom: 0; font: bold 12px/13px "Liberation Serif", serif; padding: 7px 0 1px 3px; vertical-align: middle; }
.svc { position: relative; text-align: center; white-space: normal; font: bold 10.500px/13px "Liberation Sans", sans-serif; letter-spacing: .45px; padding: 0 14px; }
.svc div { margin-bottom: -2px; }
.svc::before { content: ""; position: absolute; left: 0; top: 0; border-style: solid; border-width: 6px 6px 0 0; border-color: #008000 transparent transparent transparent; }
.tk { border-bottom: 2px solid #000; }
.bldg { background: #ff0000; color: #600000; border-right: 0; text-align: center; white-space: normal; vertical-align: middle; font: 11px/14px "Liberation Sans", sans-serif; padding: 3px 2px 0 0; }
.prov { font: italic bold 11.500px/13px "Liberation Serif", serif; letter-spacing: .7px; padding-left: 2px; border-bottom-color: #000; }
.lbl { padding-left: 3px; font-family: "Liberation Serif", serif; font-weight: bold; }
.prop { font-size: 11.500px; line-height: 16px; letter-spacing: 1.550px; }
.sel-line { font-size: 12px; font-style: italic; line-height: 15px; color: #0000ff; letter-spacing: .23px; }
.head { font-size: 14px; line-height: 17px; letter-spacing: .2px; color: #000; }
.olive { color: #333300; }
.auto { font-size: 14px; line-height: 16px; font-style: italic; color: #3366ff; letter-spacing: .75px; }
.lbl > span { line-height: 14px; }
.gap1 { margin-left: 15px; }
.gap2 { margin-left: 18px; }
.note { color: #3366ff; font-size: 11.700px; line-height: 14px; }
.ind { padding-left: 3px; }
.item { padding-left: 3px; color: #ff0000; font: bold 11.800px/13px "Liberation Serif", serif; }
.num, .red, .pc { text-align: right; font: 12px/13px "Liberation Sans", sans-serif; }
.num span, .red span, .pc span { display: inline-block; transform-origin: 100% 50%; }
.red span { transform: scaleX(.75); }
.num span { transform: scaleX(.72); }
.pc span { transform: scaleX(.82); }
.num { padding-right: 6px; font-size: 14px; line-height: 15px; }
.red { padding-right: 5px; color: #ff0000; }
.pc { padding-right: 2px; }
.freeze { position: absolute; left: 409px; top: 0; bottom: 0; width: 1px; background: #000; }
.pagebreak { position: absolute; left: 931px; top: 13px; bottom: 0; width: 1px; background: repeating-linear-gradient(180deg, #000 0, #000 3px, #fff 3px, #fff 5px); }

/* scrollbars */
.vscroll { flex: 1; background: #f5f4ea; display: flex; flex-direction: column; align-items: center; padding: 3px 2px 0 0; position: relative; }
.sbtn { display: block; width: 15px; height: 15px; border: 1px solid #fff; border-radius: 2px; background: linear-gradient(135deg, #e0ebfd, #b4cbf2); position: relative; flex: none; }
.sbtn::after { content: ""; position: absolute; left: 4px; width: 5px; height: 5px; border: 2px solid #4d6185; border-right: 0; border-bottom: 0; }
.up::after { top: 5px; transform: rotate(45deg); }
.down::after { top: 2px; transform: rotate(225deg); }
.left::after { left: 5px; top: 3px; transform: rotate(-45deg); }
.right::after { left: 3px; top: 3px; transform: rotate(135deg); }
.vthumb { width: 15px; height: 11px; margin-top: 1px; background: linear-gradient(180deg, #c9d9f8, #b1c8f0); border: 1px solid #e6eefc; border-radius: 2px; }
.down { margin-top: auto; }

/* sheet tabs */
.tabbar { height: 17px; flex: none; display: flex; align-items: stretch; background: #ece9d8; border-top: 1px solid #8a8a80; position: relative; }
.tabnav { width: 66px; flex: none; display: flex; align-items: center; padding-left: 6px; gap: 10px; }
.tabnav i { display: block; position: relative; width: 6px; height: 7px; }
.n-first::before, .n-prev::before { content: ""; position: absolute; right: 0; top: 0; border: 3.500px solid transparent; border-right: 4px solid #000; border-left: 0; }
.n-next::before, .n-last::before { content: ""; position: absolute; left: 0; top: 0; border: 3.500px solid transparent; border-left: 4px solid #000; border-right: 0; }
.n-first::after { content: ""; position: absolute; left: 0; top: 0; width: 1px; height: 7px; background: #000; }
.n-last::after { content: ""; position: absolute; right: 0; top: 0; width: 1px; height: 7px; background: #000; }
.tab { flex: none; position: relative; display: flex; align-items: center; justify-content: center; font: 12px "DejaVu Sans Condensed", sans-serif; border-bottom: 1px solid #000; white-space: nowrap; }
.tab.first { width: 86px; padding-left: 4px; }
.tab.active { width: 70px; font-weight: bold; background: #fff; border-bottom: 0; }
.tab.t1 { width: 56px; }
.tab.t2w { width: 58px; }
.tab::after { content: ""; position: absolute; top: 0; bottom: -1px; right: 0; width: 1px; background: #000; }
.tab.back::after { transform: skewX(24deg); }
.tab.fwd::after { transform: skewX(-24deg); }
.tab.first::before { content: ""; position: absolute; top: 0; bottom: -1px; left: 3px; width: 1px; background: #000; transform: skewX(24deg); }
.hscroll { position: absolute; left: 820px; top: 0; width: 187px; height: 16px; display: flex; background: #f5f4ea; border-left: 1px solid #000; padding-left: 1px; }
.hscroll .sbtn { height: 15px; width: 16px; }
.hthumb { width: 9px; height: 15px; margin-left: 8px; background: linear-gradient(90deg, #c9d9f8, #b1c8f0); border: 1px solid #e6eefc; border-radius: 2px; }
.hscroll .right { margin-left: auto; }
.rule { height: 3px; flex: none; background: #f5f4ea; }
.draw { height: 26px; }
.b4 .dd { height: 22px; }

/* taskbar */
.taskbar { height: 34px; flex: none; display: flex; align-items: flex-end; position: relative;
  background: linear-gradient(180deg, #245edb 0, #3f8cf3 3px, #245edb 6px, #2663e0 26px, #1941a5 34px); }
.start { width: 96px; height: 30px; display: flex; align-items: center; padding-left: 10px; color: #fff; border-radius: 0 10px 10px 0;
  background: linear-gradient(180deg, #5aa85a 0, #3f9a3f 12%, #3a8f3a 60%, #2d7a2d 100%); box-shadow: inset -3px 0 4px #1f5f1f; }
.flag { width: 18px; height: 18px; flex: none; }
.start-text { margin-left: 5px; font: italic bold 18px "Liberation Sans", sans-serif; text-shadow: 1px 1px 1px #1b4a1b; }
.qgrip { width: 3px; height: 22px; margin: 0 0 6px 10px; background-image: linear-gradient(180deg, #0d2f80 0, #0d2f80 2px, transparent 2px); background-size: 3px 4px; }
.task { width: 158px; height: 25px; margin: 0 0 2px 2px; display: flex; align-items: center; gap: 3px; padding-left: 9px; color: #fff; font: 10.800px "DejaVu Sans Condensed", sans-serif; white-space: nowrap; border-radius: 3px; background: linear-gradient(180deg, #4f8ff0, #3d7ee8 20%, #3a78e4); }
.qgrip + .task { margin-left: 7px; }
.task.active { background: #1e52b7; box-shadow: inset 1px 1px 2px #0f3a8a; }
.tray { position: absolute; left: 752px; right: 0; top: 0; bottom: 0; display: flex; align-items: center; gap: 2px; padding-left: 10px; color: #fff; border-left: 1px solid #0c3f9a; background: linear-gradient(180deg, #0c68d0 0, #18b0f0 3px, #1290e4 8px, #0e8be0 26px, #0a6cc8 34px); }
.clock { margin-left: 6px; font: 10.800px "DejaVu Sans Condensed", sans-serif; white-space: nowrap; }
```
